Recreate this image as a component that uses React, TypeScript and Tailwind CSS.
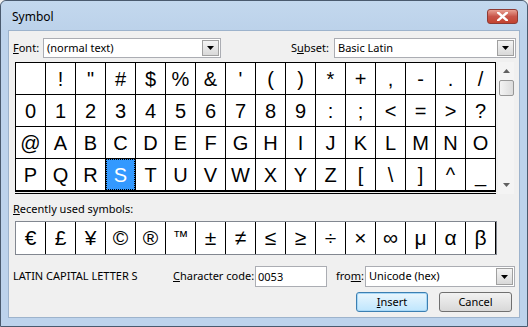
import React from 'react';

const ROWS = [
    [' ', '!', '"', '#', '$', '%', '&', "'", '(', ')', '*', '+', ',', '-', '.', '/'],
    ['0', '1', '2', '3', '4', '5', '6', '7', '8', '9', ':', ';', '<', '=', '>', '?'],
    ['@', 'A', 'B', 'C', 'D', 'E', 'F', 'G', 'H', 'I', 'J', 'K', 'L', 'M', 'N', 'O'],
    ['P', 'Q', 'R', 'S', 'T', 'U', 'V', 'W', 'X', 'Y', 'Z', '[', '\\', ']', '^', '_'],
];

const RECENT = ['€', '£', '¥', '©', '®', '™', '±', '≠', '≤', '≥', '÷', '×', '∞', 'μ', 'α', 'β'];

function DropArrow() {
    return (
        <div className="flex h-full w-[17px] items-center justify-center border border-[#a0a0a0] bg-gradient-to-b from-[#f4f4f4] to-[#d9d9d9]">
            <svg width="7" height="4" viewBox="0 0 7 4"><path d="M0 0h7L3.5 4z" fill="#000" /></svg>
        </div>
    );
}

function Combo({ value, className }: { value: string; className: string }) {
    return (
        <div className={`flex h-[20px] items-stretch border border-[#abadb3] bg-white p-px ${className}`}>
            <span className="flex-1 whitespace-nowrap pl-[2px] leading-[16px]">{value}</span>
            <DropArrow />
        </div>
    );
}

export default function App() {
    return (
        <div className="h-[327px] w-[528px] overflow-hidden bg-[#f0f0f0]">
            <div className="flex h-[327px] w-[528px] flex-col rounded-t-[6px] border border-[#4a5a6e] bg-[#bdd3ec] text-[11px] text-black [font-family:'Noto_Sans',sans-serif]">
                {/* title bar */}
                <div className="flex h-[29px] shrink-0 items-start justify-between rounded-t-[6px] bg-gradient-to-b from-[#c3d8ee] to-[#bcd2ea] pl-[11px] pr-[9px]">
                    <span className="mt-[7px] text-[12px] leading-[18px]">Symbol</span>
                    <div className="mt-[8px] flex h-[15px] w-[31px] items-center justify-center rounded-[3px] border border-[#8e3a33] bg-gradient-to-b from-[#e8a093] via-[#c8554a] to-[#c3432f]">
                        <svg width="11" height="9" viewBox="0 0 11 9">
                            <path d="M1 0.5l9 8M10 0.5l-9 8" stroke="#fff" strokeWidth="2.4" strokeLinecap="square" />
                        </svg>
                    </div>
                </div>

                {/* client */}
                <div className="mx-[7px] flex h-[288px] flex-col border border-[#9db3cc] bg-[#f0f0f0] px-[4px] whitespace-nowrap">
                    <div className="mt-[7px] flex h-[20px] items-center">
                        <span className="w-[30px]"><u>F</u>ont:</span>
                        <Combo value="(normal text)" className="w-[178px]" />
                        <span className="ml-auto mr-[5px]">S<u>u</u>bset:</span>
                        <Combo value="Basic Latin" className="-mr-[1px] w-[182px]" />
                    </div>

                    <div className="ml-[2px] mt-[4px] flex">
                        <div className="border-b-[3px] border-double border-[#000]">
                            <div className="grid grid-cols-[repeat(16,29px)] gap-px border border-black bg-black [font-family:'Liberation_Sans',Arial,sans-serif]">
                                {ROWS.flat().map((ch, i) => (
                                    <div
                                        key={i}
                                        className={`flex h-[31px] items-center justify-center text-[20px] ${ch === 'S' ? 'border border-dotted border-black bg-[#3399ff] text-white' : 'bg-white'}`}
                                    >
                                        {ch}
                                    </div>
                                ))}
                            </div>
                        </div>
                        <div className="ml-[2px] flex w-[16px] flex-col items-center bg-[#f4f4f4]">
                            <svg className="mt-[7px]" width="7" height="4" viewBox="0 0 7 4"><path d="M0 4h7L3.5 0z" fill="#606060" /></svg>
                            <div className="mt-[7px] h-[16px] w-[15px] rounded-[2px] border border-[#979797] bg-gradient-to-r from-[#f3f3f3] to-[#dcdcdc]" />
                            <div className="flex-1" />
                            <svg className="mb-[7px]" width="7" height="4" viewBox="0 0 7 4"><path d="M0 0h7L3.5 4z" fill="#606060" /></svg>
                        </div>
                    </div>

                    <div className="mt-[7px] leading-[16px]"><u>R</u>ecently used symbols:</div>
                    <div className="ml-[2px] mt-[4px] grid w-[482px] grid-cols-[repeat(16,29px)] gap-px border border-[#828790] bg-black [font-family:'Liberation_Sans',Arial,sans-serif]">
                        {RECENT.map((ch, i) => (
                            <div
                                key={i}
                                className={`flex h-[32px] justify-center bg-white ${ch === '™' ? 'items-start pt-[3px] text-[16px]' : 'items-center text-[21px]'}`}
                            >
                                {ch}
                            </div>
                        ))}
                    </div>

                    <div className="mt-[11px] flex h-[21px] items-center">
                        <span className="w-[160px]">LATIN CAPITAL LETTER S</span>
                        <span className="w-[82px]"><u>C</u>haracter code:</span>
                        <div className="h-[21px] w-[72px] border border-[#abadb3] bg-white pl-[2px] leading-[19px]">0053</div>
                        <span className="ml-[9px] w-[29px]">fro<u>m</u>:</span>
                        <Combo value="Unicode (hex)" className="h-[21px] w-[150px]" />
                    </div>

                    <div className="mt-[5px] flex justify-end gap-[11px] pr-[3px]">
                        <button className="h-[20px] w-[72px] rounded-[3px] border border-[#3c7fb1] bg-gradient-to-b from-[#eaf6fd] to-[#bee6fd] shadow-[inset_0_0_0_1px_#a8d8f7]">
                            <u>I</u>nsert
                        </button>
                        <button className="h-[20px] w-[73px] rounded-[3px] border border-[#707070] bg-gradient-to-b from-[#f2f2f2] to-[#d8d8d8]">
                            Cancel
                        </button>
                    </div>
                </div>
            </div>
        </div>
    );
}
